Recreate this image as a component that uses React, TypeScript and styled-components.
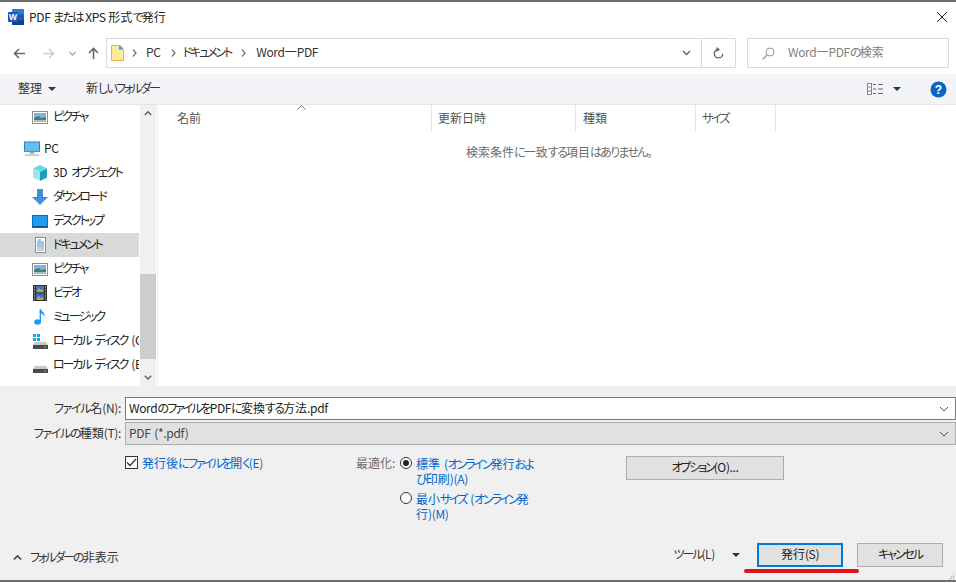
import React from "react";
import styled, { createGlobalStyle } from "styled-components";

const Global = createGlobalStyle`
  html, body { margin: 0; padding: 0; background: #fff; overflow: hidden; }
  * { box-sizing: border-box; }
  #root { width: 956px; height: 583px; }
`;

const Win = styled.div`
  position: relative;
  width: 956px;
  height: 583px;
  display: flex;
  flex-direction: column;
  overflow: hidden;
  background: #fff;
  border-top: 2px solid #6f6f6f;
  font-family: "Noto Sans CJK JP", "Noto Sans", sans-serif;
  font-feature-settings: "palt";
  font-size: 12px;
  color: #222;
`;
const KataRun = styled.span`
  letter-spacing: -2.1px;
`;
const HiraRun = styled.span`
  letter-spacing: -1.75px;
`;
const LatinRun = styled.span`
  letter-spacing: -0.35px;
  word-spacing: 1.6px;
`;
const T = ({ children }: { children: string }) => (
  <>
    {children.split(/([ァ-ヶー]+|[ぁ-ん。]+|[\x20-\x7e]+)/).map((part, i) => {
      if (!part) return null;
      if (/^[ァ-ヶー]/.test(part)) return <KataRun key={i}>{part}</KataRun>;
      if (/^[ぁ-ん。]/.test(part)) return <HiraRun key={i}>{part}</HiraRun>;
      if (/^[\x20-\x7e]/.test(part)) return <LatinRun key={i}>{part}</LatinRun>;
      return <span key={i}>{part}</span>;
    })}
  </>
);
const Title = styled.div`
  height: 30px;
  display: flex;
  align-items: center;
  padding: 0 5px 0 8px;
  gap: 5px;
`;
const TitleText = styled.span`
  flex: 1;
  color: #222;
  margin-bottom: 2px;
  ${LatinRun} {
    word-spacing: 0.4px;
  }
`;
const Nav = styled.div`
  height: 42px;
  display: flex;
  align-items: center;
  padding-left: 13px;
`;
const Glyph = styled.svg<{ $ml?: number }>`
  display: block;
  flex: none;
  margin-left: ${(p) => p.$ml ?? 0}px;
`;
const Address = styled.div`
  width: 630px;
  height: 30px;
  margin-left: 7px;
  display: flex;
  align-items: center;
  border: 1px solid #d9d9d9;
  padding-left: 4px;
`;
const Crumbs = styled.div`
  flex: 1;
  display: flex;
  align-items: center;
`;
const Crumb = styled.span<{ $ml: number }>`
  margin-left: ${(p) => p.$ml}px;
  margin-bottom: 3px;
  color: #333;
`;
const RefreshCell = styled.div`
  width: 34px;
  height: 100%;
  border-left: 1px solid #d9d9d9;
  display: flex;
  align-items: center;
  justify-content: center;
`;
const Search = styled.div`
  width: 202px;
  height: 30px;
  margin-left: 11px;
  border: 1px solid #d9d9d9;
  display: flex;
  align-items: center;
  padding-left: 14px;
  gap: 13px;
  color: #808080;
`;
const SearchText = styled.span`
  margin-bottom: 3px;
`;
const Toolbar = styled.div`
  height: 31px;
  background: #f3f4f7;
  border-bottom: 1px solid #e4e6ea;
  display: flex;
  align-items: center;
  padding-left: 18px;
`;
const ToolLabel = styled.span<{ $ml?: number }>`
  margin-left: ${(p) => p.$ml ?? 0}px;
  margin-bottom: 3px;
  color: #333;
`;
const Spacer = styled.div`
  flex: 1;
`;
const Content = styled.div`
  height: 281px;
  display: flex;
`;
const Side = styled.div`
  width: 140px;
  flex: none;
  overflow: hidden;
  display: flex;
  flex-direction: column;
`;
const SideItem = styled.div<{ $active?: boolean; $top?: boolean; $gapTop?: number }>`
  height: 24px;
  flex: none;
  width: 139px;
  margin-top: ${(p) => p.$gapTop ?? 0}px;
  display: flex;
  align-items: center;
  gap: ${(p) => (p.$top ? 4 : 5)}px;
  padding-left: ${(p) => (p.$top ? 24 : 32)}px;
  background: ${(p) => (p.$active ? "#d9d9d9" : "transparent")};
  white-space: nowrap;
  color: #222;
`;
const SideLabel = styled.span`
  margin-bottom: 3px;
  flex: 1;
  min-width: 0;
  overflow: hidden;
  text-overflow: clip;
`;
const IconBox = styled.span`
  width: 16px;
  height: 16px;
  flex: none;
  display: flex;
  align-items: center;
  justify-content: center;
`;
const Scroll = styled.div`
  width: 16px;
  flex: none;
  background: #f0f0f0;
  display: flex;
  flex-direction: column;
`;
const ScrollBtn = styled.div`
  height: 17px;
  flex: none;
  display: flex;
  align-items: center;
  justify-content: center;
`;
const ScrollTrack = styled.div`
  flex: 1;
  display: flex;
  flex-direction: column;
  padding-top: 152px;
`;
const Thumb = styled.div`
  height: 85px;
  background: #cdcdcd;
`;
const Main = styled.div`
  flex: 1;
  margin-left: 1px;
  border-left: 1px solid #f0f0f0;
  display: flex;
  flex-direction: column;
`;
const Head = styled.div`
  position: relative;
  height: 26px;
  display: flex;
`;
const Col = styled.div<{ $w: number; $pl: number }>`
  width: ${(p) => p.$w}px;
  flex: none;
  padding-left: ${(p) => p.$pl}px;
  padding-bottom: 2px;
  border-right: 1px solid #e5e5e5;
  display: flex;
  align-items: center;
  color: #555;
`;
const SortCaret = styled.svg`
  position: absolute;
  left: 139px;
  top: 0;
`;
const Empty = styled.div`
  margin-top: 12px;
  padding-left: 308px;
  color: #6d6d6d;
  line-height: 18px;
`;
const Form = styled.div`
  height: 194px;
  background: #f0f0f0;
  display: flex;
  flex-direction: column;
  padding-top: 11px;
`;
const FormRow = styled.div`
  height: 23px;
  margin-bottom: 2px;
  display: flex;
  align-items: center;
`;
const FormLabel = styled.div`
  width: 125px;
  flex: none;
  padding-right: 4px;
  text-align: right;
  color: #333;
  margin-bottom: 2px;
  ${KataRun} {
    letter-spacing: -1.3px;
  }
`;
const Field = styled.div<{ $combo?: boolean }>`
  flex: 1;
  height: 100%;
  display: flex;
  align-items: center;
  justify-content: space-between;
  padding: 0 6px 0 3px;
  background: ${(p) => (p.$combo ? "#e1e1e1" : "#fff")};
  border: 1px solid ${(p) => (p.$combo ? "#adadad" : "#7a7a7a")};
  color: ${(p) => (p.$combo ? "#444" : "#222")};
`;
const FieldText = styled.span`
  margin-bottom: 2px;
`;
const Options = styled.div`
  display: flex;
  align-items: flex-start;
  padding-left: 125px;
  margin-top: 9px;
  height: 85px;
`;
const CheckCol = styled.label`
  width: 231px;
  flex: none;
  display: flex;
  align-items: flex-start;
  gap: 4px;
  color: #0066cc;
  line-height: 14px;
`;
const CheckBox = styled.span`
  width: 13px;
  height: 13px;
  flex: none;
  border: 1px solid #333;
  background: #fff;
  display: flex;
  align-items: center;
  justify-content: center;
`;
const OptLabel = styled.div`
  width: 44px;
  flex: none;
  color: #6d6d6d;
  line-height: 14px;
`;
const RadioCol = styled.div`
  width: 135px;
  flex: none;
  display: flex;
  flex-direction: column;
  gap: 5px;
`;
const RadioRow = styled.div`
  display: flex;
  gap: 4px;
`;
const RadioDot = styled.span<{ $on?: boolean }>`
  width: 12px;
  height: 12px;
  flex: none;
  margin-top: 1px;
  border-radius: 50%;
  border: 1px solid #333;
  background: #fff;
  display: flex;
  align-items: center;
  justify-content: center;
  &::after {
    content: "";
    width: 6px;
    height: 6px;
    border-radius: 50%;
    background: ${(p) => (p.$on ? "#222" : "transparent")};
  }
`;
const RadioText = styled.div`
  width: 120px;
  color: #0066cc;
  line-height: 15px;
`;
const Btn = styled.div<{ $primary?: boolean; $w: number }>`
  width: ${(p) => p.$w}px;
  height: 24px;
  flex: none;
  display: flex;
  align-items: center;
  justify-content: center;
  padding-bottom: 3px;
  background: #e1e1e1;
  border: ${(p) => (p.$primary ? "2px solid #0078d7" : "1px solid #adadad")};
  color: #222;
`;
const OptBtnWrap = styled.div`
  margin-left: 91px;
`;
const Bottom = styled.div`
  position: relative;
  margin-top: 2px;
  display: flex;
  align-items: center;
  height: 24px;
  padding: 0 13px;
`;
const Hide = styled.div`
  display: flex;
  align-items: center;
  gap: 8px;
  color: #333;
  margin-top: 6px;
`;
const HideText = styled.span`
  margin-bottom: 3px;
`;
const ToolsLabel = styled.span`
  color: #333;
  margin-bottom: 3px;
`;
const Gap = styled.div<{ $w: number }>`
  width: ${(p) => p.$w}px;
  flex: none;
`;
const RedMark = styled.div`
  position: absolute;
  left: 744px;
  top: 567px;
  width: 115px;
  height: 4px;
  border-radius: 2px;
  background: #e0141a;
`;
const Foot = styled.div`
  height: 3px;
  background: #fff;
  border-top: 2px solid #6f6f6f;
  flex: none;
`;
const Grip = styled.svg`
  position: absolute;
  right: 1px;
  bottom: 3px;
`;

const Chevron = ({ w = 10, dir = "down", color = "#555", sw = 1.4 }: { w?: number; dir?: "down" | "up"; color?: string; sw?: number }) => (
  <svg width={w} height={w * 0.6} viewBox="0 0 10 6" style={{ display: "block" }}>
    <path d={dir === "down" ? "M1 1l4 4 4-4" : "M1 5l4-4 4 4"} fill="none" stroke={color} strokeWidth={sw} />
  </svg>
);
const Sep = ({ ml }: { ml: number }) => (
  <Glyph $ml={ml} width="5" height="8" viewBox="0 0 5 8">
    <path d="M1 0.5l3 3.5-3 3.5" fill="none" stroke="#777" strokeWidth="1.3" />
  </Glyph>
);
const Tri = ({ ml = 0, color = "#333" }: { ml?: number; color?: string }) => (
  <Glyph $ml={ml} width="8" height="4" viewBox="0 0 8 4">
    <path d="M0 0h8L4 4z" fill={color} />
  </Glyph>
);

const PictureIcon = () => (
  <svg width="16" height="14" viewBox="0 0 16 14">
    <rect x=".5" y="1.5" width="15" height="12" fill="#fff" stroke="#8d8d8d" />
    <rect x="2" y="3" width="12" height="9" fill="#7fb3de" />
    <path d="M2 8l4-2 3 2 5-1v5H2z" fill="#4f7a6b" />
    <path d="M2 10h12v2H2z" fill="#a6bfb8" />
  </svg>
);
const PcIcon = () => (
  <svg width="17" height="16" viewBox="0 0 17 16">
    <rect x=".5" y=".5" width="16" height="10" fill="#5fc0f5" stroke="#3a7cb0" />
    <path d="M6 11h5v2H6z" fill="#9aa5ae" />
    <path d="M1 14h15v1H1z" fill="#8d98a3" />
  </svg>
);
const CubeIcon = () => (
  <svg width="16" height="16" viewBox="0 0 16 16">
    <path d="M8 0l7 3.5L8 7 1 3.5z" fill="#66d9e6" />
    <path d="M1 3.5L8 7v9l-7-3.5z" fill="#9ce6ee" />
    <path d="M15 3.5L8 7v9l7-3.5z" fill="#1d9fb8" />
  </svg>
);
const DownIcon = () => (
  <svg width="16" height="16" viewBox="0 0 16 16">
    <path d="M5 0h6v8h5l-8 8-8-8h5z" fill="#3f8fdc" />
  </svg>
);
const DesktopIcon = () => (
  <svg width="16" height="13" viewBox="0 0 16 13">
    <rect x=".5" y=".5" width="15" height="12" fill="#1e9cef" stroke="#0b6cb5" />
    <path d="M1 11h14v1H1z" fill="#0a4f8c" />
  </svg>
);
const DocIcon = () => (
  <svg width="11" height="16" viewBox="0 0 11 16">
    <rect x=".5" y=".5" width="10" height="15" fill="#fff" stroke="#8d8d8d" />
    <path d="M3 3h3M2 5h7M2 7h7M2 9h7" stroke="#2a8fdc" strokeWidth="1" />
    <path d="M2 11h7M2 13h7" stroke="#9a9a9a" strokeWidth="1" />
  </svg>
);
const VideoIcon = () => (
  <svg width="14" height="16" viewBox="0 0 14 16">
    <rect width="14" height="16" fill="#333" />
    <rect x="3" y="1" width="8" height="6.5" fill="#3c6fc4" />
    <rect x="3" y="8.5" width="8" height="6.5" fill="#3c6fc4" />
    <path d="M4 5l2-2 2 2 2-1v3H4z" fill="#c9a13a" />
    <path d="M4 13l2-2 2 2 2-1v3H4z" fill="#c9a13a" />
    <path d="M1 2h1M1 5h1M1 8h1M1 11h1M1 14h1M12 2h1M12 5h1M12 8h1M12 11h1M12 14h1" stroke="#ddd" />
  </svg>
);
const MusicIcon = () => (
  <svg width="12" height="16" viewBox="0 0 12 16">
    <ellipse cx="3.6" cy="13" rx="3.4" ry="2.8" fill="#1e9cef" />
    <path d="M5.6 13V0h1.4c.2 2.6 4.6 3.6 3.4 8-.6-2.2-2-3-3.4-3.4V13z" fill="#1e9cef" />
  </svg>
);
const DriveIcon = ({ win }: { win?: boolean }) => (
  <svg width="15" height="16" viewBox="0 0 15 16">
    {win && <path d="M0 1h3v3H0zM4 1h3v3H4zM0 5h3v3H0zM4 5h3v3H4z" fill="#12a5ea" />}
    <path d="M2 9h11l2 3H0z" fill="#c9c9c9" />
    <rect y="12" width="15" height="4" fill="#4a4a4a" />
    <rect x="11" y="13.5" width="2" height="1" fill="#5fd35f" />
  </svg>
);
const WordIcon = () => (
  <svg width="16" height="16" viewBox="0 0 16 16" style={{ display: "block", flex: "none" }}>
    <rect x="4" y="0" width="12" height="16" rx="1" fill="#2b7cd3" />
    <rect x="4" y="11" width="12" height="5" fill="#103f91" />
    <rect x="4" y="5.5" width="12" height="5.5" fill="#185abd" />
    <rect x="0" y="3" width="10" height="10" rx="1" fill="#185abd" />
    <text x="5" y="11" textAnchor="middle" fontSize="8.5" fontWeight="700" fill="#fff" fontFamily="Liberation Sans, sans-serif">W</text>
  </svg>
);

const items: { label: string; icon: React.ReactNode; top?: boolean; active?: boolean; gap?: number }[] = [
  { label: "ピクチャ", icon: <PictureIcon /> },
  { label: "PC", icon: <PcIcon />, top: true, gap: 8 },
  { label: "3D オブジェクト", icon: <CubeIcon /> },
  { label: "ダウンロード", icon: <DownIcon /> },
  { label: "デスクトップ", icon: <DesktopIcon /> },
  { label: "ドキュメント", icon: <DocIcon />, active: true },
  { label: "ピクチャ", icon: <PictureIcon /> },
  { label: "ビデオ", icon: <VideoIcon /> },
  { label: "ミュージック", icon: <MusicIcon /> },
  { label: "ローカル ディスク (C:)", icon: <DriveIcon win /> },
  { label: "ローカル ディスク (E:)", icon: <DriveIcon /> },
];

export default function App() {
  return (
    <Win>
      <Global />
      <Title>
        <WordIcon />
        <TitleText><T>PDF または XPS 形式で発行</T></TitleText>
        <svg width="12" height="12" viewBox="0 0 12 12" style={{ display: "block", marginRight: "3px" }}>
          <path d="M1 1l10 10M11 1L1 11" stroke="#222" strokeWidth="1" fill="none" />
        </svg>
      </Title>
      <Nav>
        <Glyph width="12" height="11" viewBox="0 0 12 11">
          <path d="M12 5.5H1.5M6 1L1.5 5.5 6 10" fill="none" stroke="#6a6a6a" strokeWidth="1.6" />
        </Glyph>
        <Glyph $ml={18} width="12" height="11" viewBox="0 0 12 11">
          <path d="M0 5.5h10.5M6 1l4.5 4.5L6 10" fill="none" stroke="#cfcfcf" strokeWidth="1.6" />
        </Glyph>
        <Glyph $ml={14} width="7" height="5" viewBox="0 0 7 5">
          <path d="M.5 1l3 3 3-3" fill="none" stroke="#aaa" strokeWidth="1.3" />
        </Glyph>
        <Glyph $ml={12} width="11" height="12" viewBox="0 0 11 12">
          <path d="M5.5 12V1.5M1 6l4.5-4.5L10 6" fill="none" stroke="#6a6a6a" strokeWidth="1.6" />
        </Glyph>
        <Address>
          <Crumbs>
            <svg width="13" height="16" viewBox="0 0 13 16" style={{ display: "block", flex: "none" }}>
              <path d="M.5.5h8l4 4v11H.5z" fill="#fdeb9c" stroke="#dcb64a" />
              <path d="M8 .5h2v2h2v2H8z" fill="#4c9be0" />
            </svg>
            <Sep ml={8} />
            <Crumb $ml={9}><T>PC</T></Crumb>
            <Sep ml={10} />
            <Crumb $ml={7}><T>ドキュメント</T></Crumb>
            <Sep ml={10} />
            <Crumb $ml={10}><T>Word一PDF</T></Crumb>
          </Crumbs>
          <Chevron w={9} color="#666" sw={1.6} />
          <Gap $w={10} />
          <RefreshCell>
            <svg width="11" height="12" viewBox="0 0 11 12" style={{ display: "block" }}>
              <path d="M5.5 2.5a4.2 4.2 0 1 0 4.2 4.2" fill="none" stroke="#666" strokeWidth="1.4" />
              <path d="M3.5 0l3.5 2.5-3.5 2.5z" fill="#666" />
            </svg>
          </RefreshCell>
        </Address>
        <Search>
          <svg width="13" height="13" viewBox="0 0 13 13" style={{ display: "block", flex: "none" }}>
            <circle cx="8" cy="5" r="4" fill="none" stroke="#9a9a9a" />
            <path d="M5 8l-4.5 4.5" stroke="#c28a6a" strokeWidth="1.2" />
          </svg>
          <SearchText><T>Word一PDFの検索</T></SearchText>
        </Search>
      </Nav>
      <Toolbar>
        <ToolLabel>整理</ToolLabel>
        <Tri ml={6} />
        <ToolLabel $ml={30}><T>新しいフォルダー</T></ToolLabel>
        <Spacer />
        <svg width="16" height="12" viewBox="0 0 16 12" style={{ display: "block", flex: "none" }}>
          <rect x=".5" y=".5" width="4" height="11" fill="#fff" stroke="#8a8a8a" />
          <path d="M1 4h3M1 8h3" stroke="#8a8a8a" />
          <path d="M6 1.5h3M11 1.5h5M6 6h3M11 6h5M6 10.5h3M11 10.5h5" stroke="#666" />
        </svg>
        <Tri ml={10} color="#1f3a5f" />
        <Glyph $ml={29} width="17" height="17" viewBox="0 0 17 17">
          <circle cx="8.5" cy="8.5" r="8" fill="#0a66c2" />
          <text x="8.5" y="13" textAnchor="middle" fontSize="12" fontWeight="700" fill="#fff" fontFamily="Liberation Sans, sans-serif">?</text>
        </Glyph>
        <Gap $w={9} />
      </Toolbar>
      <Content>
        <Side>
          {items.map((it, i) => (
            <SideItem key={i} $top={it.top} $active={it.active} $gapTop={it.gap}>
              <IconBox>{it.icon}</IconBox>
              <SideLabel><T>{it.label}</T></SideLabel>
            </SideItem>
          ))}
        </Side>
        <Scroll>
          <ScrollBtn>
            <Chevron w={8} dir="up" color="#606060" sw={1.8} />
          </ScrollBtn>
          <ScrollTrack>
            <Thumb />
          </ScrollTrack>
          <ScrollBtn>
            <Chevron w={8} color="#606060" sw={1.8} />
          </ScrollBtn>
        </Scroll>
        <Main>
          <Head>
            <SortCaret width="9" height="5" viewBox="0 0 9 5">
              <path d="M.5 4.5l4-4 4 4" fill="none" stroke="#777" />
            </SortCaret>
            <Col $w={274} $pl={19}>名前</Col>
            <Col $w={144} $pl={6}>更新日時</Col>
            <Col $w={120} $pl={7}>種類</Col>
            <Col $w={80} $pl={6}><T>サイズ</T></Col>
          </Head>
          <Empty><T>検索条件に一致する項目はありません。</T></Empty>
        </Main>
      </Content>
      <Form>
        <FormRow>
          <FormLabel><T>ファイル名(N):</T></FormLabel>
          <Field>
            <FieldText><T>WordのファイルをPDFに変換する方法.pdf</T></FieldText>
            <Chevron w={10} color="#555" sw={1} />
          </Field>
        </FormRow>
        <FormRow>
          <FormLabel><T>ファイルの種類(T):</T></FormLabel>
          <Field $combo>
            <FieldText><T>PDF (*.pdf)</T></FieldText>
            <Chevron w={10} color="#555" sw={1} />
          </Field>
        </FormRow>
        <Options>
          <CheckCol>
            <CheckBox>
              <svg width="11" height="9" viewBox="0 0 11 9" style={{ display: "block" }}>
                <path d="M1 4.5l3 3 6-6.5" fill="none" stroke="#333" strokeWidth="1.3" />
              </svg>
            </CheckBox>
            <span><T>発行後にファイルを開く(E)</T></span>
          </CheckCol>
          <OptLabel>最適化:</OptLabel>
          <RadioCol>
            <RadioRow>
              <RadioDot $on />
              <RadioText><T>標準 (オンライン発行および印刷)(A)</T></RadioText>
            </RadioRow>
            <RadioRow>
              <RadioDot />
              <RadioText><T>最小サイズ (オンライン発行)(M)</T></RadioText>
            </RadioRow>
          </RadioCol>
          <OptBtnWrap>
            <Btn $w={158}><span><T>オプション(O)...</T></span></Btn>
          </OptBtnWrap>
        </Options>
        <Bottom>
          <Hide>
            <Chevron w={9} dir="up" color="#444" sw={1.8} />
            <HideText><T>フォルダーの非表示</T></HideText>
          </Hide>
          <Spacer />
          <ToolsLabel><T>ツール(L)</T></ToolsLabel>
          <Gap $w={17} />
          <Tri color="#333" />
          <Gap $w={17} />
          <Btn $primary $w={86}><span><T>発行(S)</T></span></Btn>
          <Gap $w={14} />
          <Btn $w={86}><span><T>キャンセル</T></span></Btn>
        </Bottom>
      </Form>
      <Foot />
      <RedMark />
      <Grip width="6" height="6" viewBox="0 0 6 6">
        <path d="M4 0h1v1H4zM2 2h1v1H2zM4 2h1v1H4zM0 4h1v1H0zM2 4h1v1H2zM4 4h1v1H4z" fill="#a0a0a0" />
      </Grip>
    </Win>
  );
}
